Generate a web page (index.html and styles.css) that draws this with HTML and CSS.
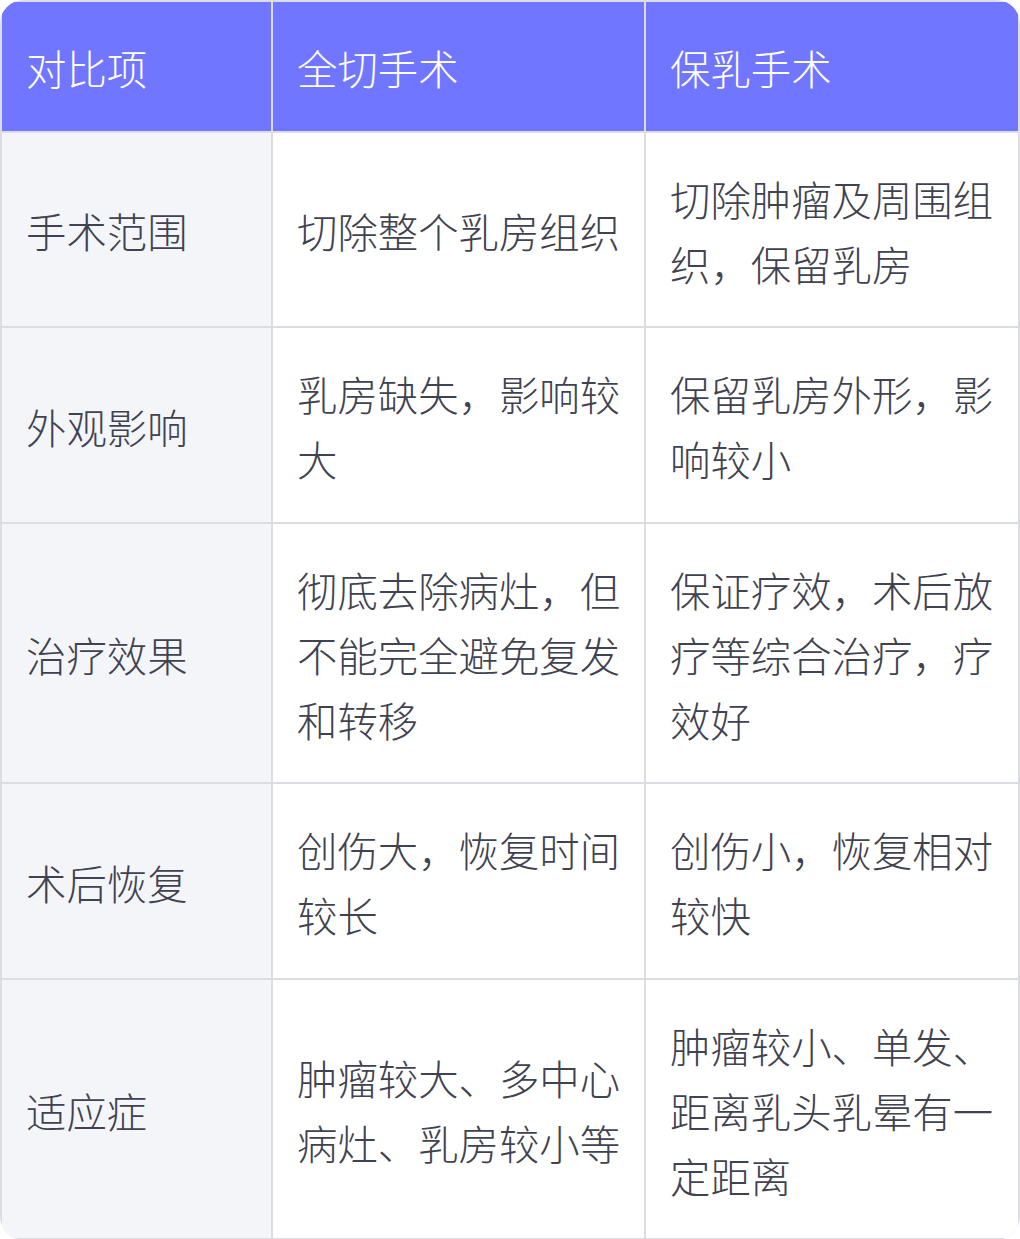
FILE: index.html
```html
<!DOCTYPE html>
<html lang="zh-CN">
<head>
<meta charset="utf-8">
<link rel="stylesheet" href="styles.css">
</head>
<body>
<div class="table">
  <div class="cell head">对比项</div>
  <div class="cell head">全切手术</div>
  <div class="cell head">保乳手术</div>

  <div class="cell label">手术范围</div>
  <div class="cell">切除整个乳房组织</div>
  <div class="cell">切除肿瘤及周围组织，保留乳房</div>

  <div class="cell label">外观影响</div>
  <div class="cell">乳房缺失，影响较大</div>
  <div class="cell">保留乳房外形，影响较小</div>

  <div class="cell label">治疗效果</div>
  <div class="cell">彻底去除病灶，但不能完全避免复发和转移</div>
  <div class="cell">保证疗效，术后放疗等综合治疗，疗效好</div>

  <div class="cell label">术后恢复</div>
  <div class="cell">创伤大，恢复时间较长</div>
  <div class="cell">创伤小，恢复相对较快</div>

  <div class="cell label">适应症</div>
  <div class="cell">肿瘤较大、多中心病灶、乳房较小等</div>
  <div class="cell">肿瘤较小、单发、距离乳头乳晕有一定距离</div>
</div>
</body>
</html>
```

FILE: styles.css
```css
html, body {
  margin: 0;
  padding: 0;
  background: #ffffff;
}

.table {
  width: 1020px;
  box-sizing: border-box;
  display: grid;
  grid-template-columns: 269px 371px 1fr;
  gap: 2px;
  padding: 2px;
  background: #dcdde3;
  border-radius: 24px;
  overflow: hidden;
  font-family: "Noto Sans CJK SC", "Noto Sans", sans-serif;
  font-weight: 300;
  font-size: 40.4px;
  line-height: 64.8px;
  color: #3f4250;
}

.cell {
  background: #ffffff;
  padding: 34px 20px 30px 24px;
  display: flex;
  align-items: center;
}

.head {
  background: #7076ff;
  color: #ffffff;
}

.label {
  background: #f4f5f9;
}
```
